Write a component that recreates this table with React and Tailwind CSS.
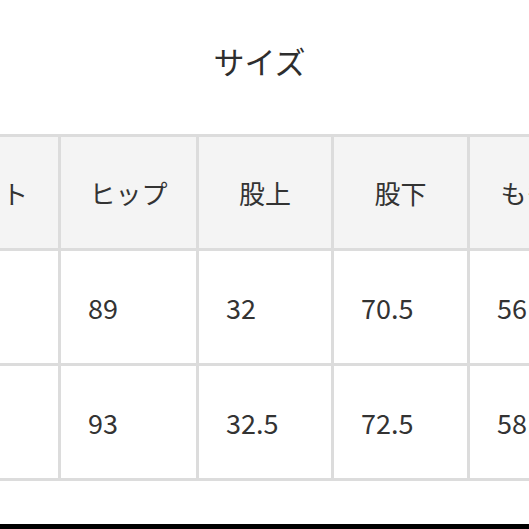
import React from "react";

const headers = ["ウエスト", "ヒップ", "股上", "股下", "もも周り"];
const rows = [
  ["", "89", "32", "70.5", "56"],
  ["", "93", "32.5", "72.5", "58"],
];

export default function App() {
  return (
    <div className="w-[529px] h-[529px] bg-white flex flex-col overflow-hidden font-['Noto_Sans_CJK_JP','Noto_Sans',sans-serif] text-[#333333]">
      <div className="h-[134px] flex items-center justify-center pb-[13px] pr-[10px]">
        <h1 className="text-[31px] leading-none font-normal text-[#2e2e2e]">サイズ</h1>
      </div>
      <div className="overflow-hidden">
        <div className="ml-[-106px] w-max flex flex-col gap-[3px] py-[3px] bg-[#dcdcdc]">
          <div className="grid grid-cols-[164px_135px_132px_133px_165px] gap-[3px] h-[111px]">
            {headers.map((h, i) => (
              <div key={i} className="bg-[#f4f4f4] flex items-center justify-center text-[26px] leading-none">
                {h}
              </div>
            ))}
          </div>
          {rows.map((r, ri) => (
            <div key={ri} className="grid grid-cols-[164px_135px_132px_133px_165px] gap-[3px] h-[112px]">
              {r.map((c, ci) => (
                <div key={ci} className="bg-white flex items-center pl-[27px] text-[27px] leading-none">
                  {c}
                </div>
              ))}
            </div>
          ))}
        </div>
      </div>
      <div className="flex-1" />
      <div className="h-[5px] bg-black" />
    </div>
  );
}
